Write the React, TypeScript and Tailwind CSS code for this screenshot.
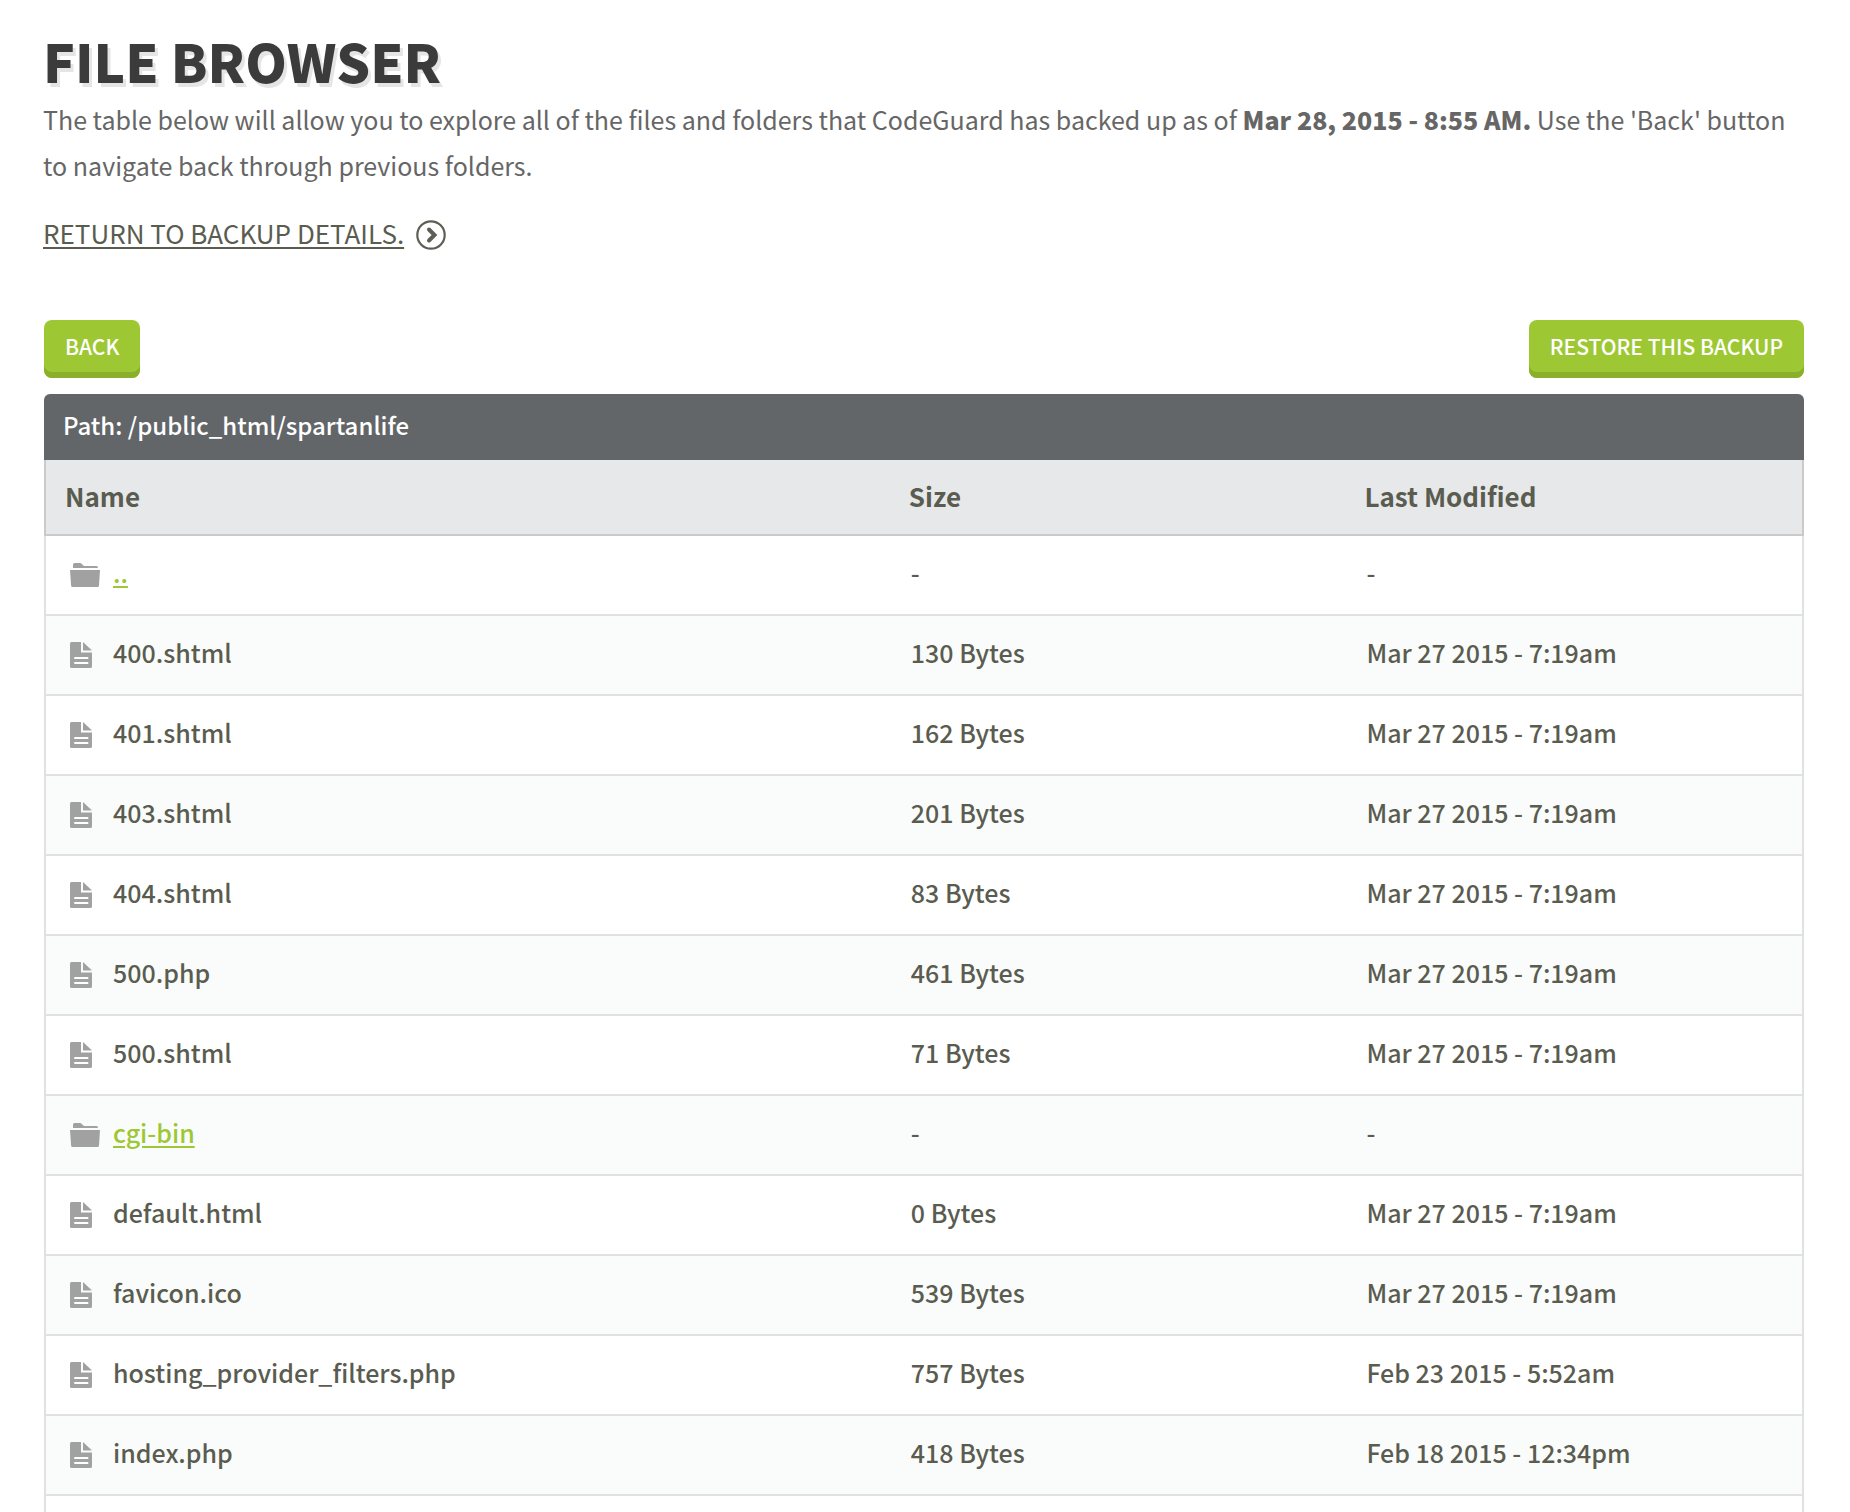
type Entry = {
  name: string;
  size: string;
  modified: string;
  folder?: boolean;
};

const entries: Entry[] = [
  { name: "..", size: "-", modified: "-", folder: true },
  { name: "400.shtml", size: "130 Bytes", modified: "Mar 27 2015 - 7:19am" },
  { name: "401.shtml", size: "162 Bytes", modified: "Mar 27 2015 - 7:19am" },
  { name: "403.shtml", size: "201 Bytes", modified: "Mar 27 2015 - 7:19am" },
  { name: "404.shtml", size: "83 Bytes", modified: "Mar 27 2015 - 7:19am" },
  { name: "500.php", size: "461 Bytes", modified: "Mar 27 2015 - 7:19am" },
  { name: "500.shtml", size: "71 Bytes", modified: "Mar 27 2015 - 7:19am" },
  { name: "cgi-bin", size: "-", modified: "-", folder: true },
  { name: "default.html", size: "0 Bytes", modified: "Mar 27 2015 - 7:19am" },
  { name: "favicon.ico", size: "539 Bytes", modified: "Mar 27 2015 - 7:19am" },
  { name: "hosting_provider_filters.php", size: "757 Bytes", modified: "Feb 23 2015 - 5:52am" },
  { name: "index.php", size: "418 Bytes", modified: "Feb 18 2015 - 12:34pm" },
];

function FolderIcon() {
  return (
    <svg className="h-6 w-[30px]" viewBox="0 0 30 24" fill="#a1a1a1" aria-hidden="true">
      <path d="M3 5V1.500Q3 0 4.500 0H10Q11 0 12 1.200L14 3H26.500Q28 3 28 5Z" />
      <path d="M0 7H30L29 22.500Q28.900 24 27.500 24H2.500Q1.200 24 1.100 22.500Z" />
    </svg>
  );
}

function FileIcon() {
  return (
    <svg className="h-[26px] w-[22px]" viewBox="0 0 22 26" aria-hidden="true">
      <path d="M1.500 0H11V10.500H22V24.500Q22 26 20.500 26H1.500Q0 26 0 24.500V1.500Q0 0 1.500 0Z" fill="#a1a1a1" />
      <path d="M13 0L22 8.600H13Z" fill="#a1a1a1" />
      <path d="M5 16H17.500M5 21H17.500" stroke="#fff" strokeWidth="2" strokeLinecap="round" />
    </svg>
  );
}

function ArrowIcon() {
  return (
    <svg className="size-[30px]" viewBox="0 0 30 30" fill="none" stroke="#5d5f55" aria-hidden="true">
      <circle cx="15" cy="15" r="13.700" strokeWidth="2.200" />
      <path d="M13 9.500L18.500 15L13 20.500" strokeWidth="4" strokeLinecap="round" />
    </svg>
  );
}

function ActionButton({ children }: { children: string }) {
  return (
    <button
      type="button"
      className="h-[58px] cursor-pointer rounded-lg bg-[#9dc834] px-[21px] pb-1 text-[21px] font-medium text-white shadow-[inset_0_-6px_0_#8aaf2b]"
    >
      {children}
    </button>
  );
}

export default function App() {
  return (
    <main className="min-h-screen bg-white pt-6 pr-[46px] pl-[43px] font-['Noto_Sans_CJK_SC','Noto_Sans',sans-serif] text-[25px] text-[#5a5c50]">
      <h1 className="text-[53px] leading-[72px] font-black text-[#3b3b3b] [text-shadow:3px_4px_0_#e5e5e5]">
        FILE BROWSER
      </h1>
      <p className="leading-[46px] text-[#666]">
        The table below will allow you to explore all of the files and folders that CodeGuard has backed up as of{" "}
        <strong className="font-black">Mar 28, 2015 - 8:55 AM.</strong> Use the &apos;Back&apos; button to navigate back
        through previous folders.
      </p>
      <div className="mt-6 flex">
        <a href="#details" className="flex items-center gap-3 text-[26px] leading-[42px]">
          <span className="pb-1 underline decoration-2 underline-offset-3">RETURN TO BACKUP DETAILS.</span>
          <ArrowIcon />
        </a>
      </div>

      <div className="mt-[62px] ml-px flex items-center justify-between">
        <ActionButton>BACK</ActionButton>
        <ActionButton>RESTORE THIS BACKUP</ActionButton>
      </div>

      <section className="mt-4 ml-px">
        <h2 className="rounded-t-md bg-[#636669] px-[19px] pt-2 pb-3 text-2xl leading-[46px] font-medium text-white">
          Path: /public_html/spartanlife
        </h2>
        <table className="w-full table-fixed border-separate border-spacing-0 text-left">
          <thead>
            <tr className="h-[76px] bg-[#e7e8ea] text-[26px]">
              <th className="w-[48%] border-b-2 border-l-2 border-[#cacaca] pb-1 pl-[19px] font-bold">Name</th>
              <th className="w-[26%] border-b-2 border-[#cacaca] pb-1 pl-5 font-bold">Size</th>
              <th className="w-[26%] border-r-2 border-b-2 border-[#cacaca] pb-1 pl-[18px] font-bold">Last Modified</th>
            </tr>
          </thead>
          <tbody className="font-medium">
            {entries.map((entry) => (
              <tr key={entry.name} className="h-20 even:bg-[#fafcfb]">
                <td className="border-b-2 border-l-2 border-[#e1e1e1] pb-1 pl-6">
                  <div className="flex items-center">
                    <span className="w-[43px] shrink-0 pt-1">{entry.folder ? <FolderIcon /> : <FileIcon />}</span>
                    {entry.folder ? (
                      <a
                        href={`#${entry.name}`}
                        className="text-[#9dc834] underline decoration-2 underline-offset-3"
                      >
                        {entry.name}
                      </a>
                    ) : (
                      <span>{entry.name}</span>
                    )}
                  </div>
                </td>
                <td className="border-b-2 border-[#e1e1e1] pb-1 pl-[22px]">{entry.size}</td>
                <td className="border-r-2 border-b-2 border-[#e1e1e1] pb-1 pl-5">{entry.modified}</td>
              </tr>
            ))}
            <tr className="h-4">
              <td colSpan={3} className="border-x-2 border-[#e1e1e1]" />
            </tr>
          </tbody>
        </table>
      </section>
    </main>
  );
}
